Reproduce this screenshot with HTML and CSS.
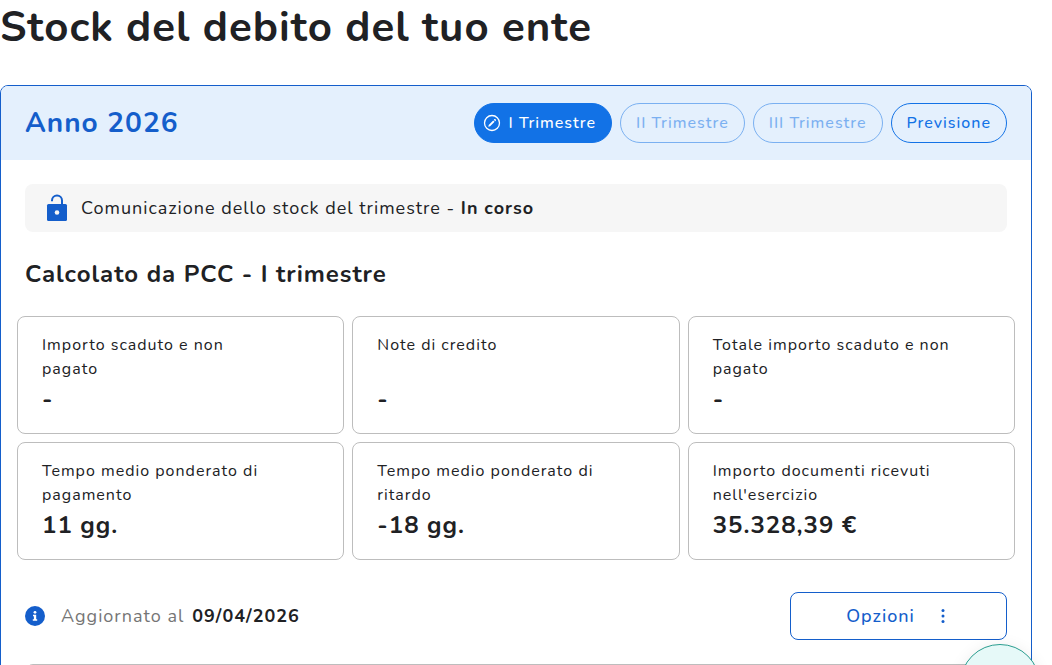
FILE: index.html
```html
<!DOCTYPE html>
<html lang="it">
<head>
    <meta charset="UTF-8">
    <meta name="viewport" content="width=device-width, initial-scale=1.0">
    <title>Stock del debito</title>
    <link rel="stylesheet" href="styles.css">
</head>
<body>
    <main class="page">
        <h1 class="page-title">Stock del debito del tuo ente</h1>

        <section class="year-card">
            <header class="year-header">
                <h2 class="year-title">Anno 2026</h2>
                <div class="periods">
                    <button type="button" class="chip chip-active">
                        <svg class="chip-icon" viewBox="0 0 18 18" aria-hidden="true">
                            <circle cx="9" cy="9" r="7.5" fill="none" stroke="currentColor" stroke-width="1.3"/>
                            <path d="M5.3 12.7l.4-1.8 4.5-4.5 1.4 1.4-4.5 4.5zM10.8 5.8l.7-.7q.4-.4.8 0l.6.6q.4.4 0 .8l-.7.7z" fill="currentColor"/>
                        </svg>
                        I Trimestre
                    </button>
                    <button type="button" class="chip" disabled>II Trimestre</button>
                    <button type="button" class="chip" disabled>III Trimestre</button>
                    <button type="button" class="chip">Previsione</button>
                </div>
            </header>

            <div class="year-body">
                <div class="status">
                    <svg class="status-icon" viewBox="0 0 24 28" aria-hidden="true">
                        <path d="M7 7.2v-.6a5 5 0 0 1 10 0V11" fill="none" stroke="currentColor" stroke-width="2"/>
                        <rect x="2" y="10" width="20" height="17" rx="1.5" fill="currentColor"/>
                        <circle cx="12" cy="18.5" r="2.3" fill="#f6f6f6"/>
                    </svg>
                    <p>Comunicazione dello stock del trimestre - <strong>In corso</strong></p>
                </div>

                <h3 class="section-title">Calcolato da PCC - I trimestre</h3>

                <dl class="figures">
                    <div class="figure">
                        <dt>Importo scaduto e non<br>pagato</dt>
                        <dd>-</dd>
                    </div>
                    <div class="figure">
                        <dt>Note di credito</dt>
                        <dd>-</dd>
                    </div>
                    <div class="figure">
                        <dt>Totale importo scaduto e non<br>pagato</dt>
                        <dd>-</dd>
                    </div>
                    <div class="figure">
                        <dt>Tempo medio ponderato di<br>pagamento</dt>
                        <dd>11 gg.</dd>
                    </div>
                    <div class="figure">
                        <dt>Tempo medio ponderato di<br>ritardo</dt>
                        <dd>-18 gg.</dd>
                    </div>
                    <div class="figure">
                        <dt>Importo documenti ricevuti<br>nell'esercizio</dt>
                        <dd>35.328,39 €</dd>
                    </div>
                </dl>

                <div class="update-row">
                    <div class="updated">
                        <svg class="info-icon" viewBox="0 0 20 20" aria-hidden="true">
                            <circle cx="10" cy="10" r="10" fill="#145ecb"/>
                            <circle cx="10" cy="6.3" r="1.4" fill="#fff"/>
                            <path d="M8 8.8h3.2v4.4h1v1.5H7.8v-1.5h1.1v-2.9H8z" fill="#fff"/>
                        </svg>
                        <span>Aggiornato al</span>
                        <strong>09/04/2026</strong>
                    </div>
                    <button type="button" class="options">
                        Opzioni
                        <svg class="dots" viewBox="0 0 16 16" aria-hidden="true">
                            <circle cx="8" cy="2.5" r="1.5" fill="currentColor"/>
                            <circle cx="8" cy="8" r="1.5" fill="currentColor"/>
                            <circle cx="8" cy="13.5" r="1.5" fill="currentColor"/>
                        </svg>
                    </button>
                </div>

                <div class="details"></div>
            </div>
        </section>
    </main>

    <button type="button" class="help" aria-label="Assistenza"></button>
</body>
</html>
```

FILE: styles.css
```css
* {
    box-sizing: border-box;
}
body {
    margin: 0;
    height: 100vh;
    overflow: hidden;
    background: #fff;
    color: #202124;
    font-family: Nunito, "Open Sans", sans-serif;
    font-size: 16px;
    line-height: 24px;
    letter-spacing: 1px;
}
h1, h2, h3, p, dl, dd {
    margin: 0;
}
button {
    font: inherit;
    letter-spacing: inherit;
    cursor: pointer;
}
.page {
    padding-right: 20px;
}
.page-title {
    font-size: 42px;
    line-height: 56px;
    padding-bottom: 29px;
}
.year-card {
    border: 1px solid #145ecb;
    border-radius: 8px;
    overflow: hidden;
}
.year-header {
    display: flex;
    align-items: center;
    justify-content: space-between;
    padding: 17px 24px;
    background: #e4f0fd;
}
.year-title {
    color: #145ecb;
    font-size: 28px;
    line-height: 40px;
}
.periods {
    display: flex;
    gap: 8px;
}
.chip {
    display: flex;
    align-items: center;
    gap: 8px;
    height: 40px;
    padding: 0 15px;
    border: 1px solid #1272e6;
    border-radius: 20px;
    background: transparent;
    color: #1272e6;
    font-weight: 500;
}
.chip-active {
    padding-left: 8px;
    background: #1272e6;
    color: #fff;
}
.chip:disabled {
    opacity: 0.5;
    cursor: default;
}
.chip-icon {
    width: 18px;
    height: 18px;
}
.year-body {
    padding: 24px 24px 0;
}
.status {
    display: flex;
    align-items: center;
    gap: 12px;
    height: 48px;
    padding: 0 20px;
    border-radius: 8px;
    background: #f6f6f6;
    font-size: 18px;
}
.status-icon {
    width: 24px;
    height: 28px;
    color: #145ecb;
}
.section-title {
    padding: 24px 0;
    font-size: 24px;
    line-height: 36px;
}
.figures {
    display: grid;
    grid-template-columns: repeat(3, 1fr);
    gap: 8px;
    margin: 0 -8px;
}
.figure {
    display: flex;
    flex-direction: column;
    justify-content: space-between;
    min-height: 118px;
    padding: 16px 24px;
    border: 1px solid #bdbdbd;
    border-radius: 8px;
}
.figure dd {
    font-size: 24px;
    font-weight: 700;
    line-height: 36px;
}
.update-row {
    display: flex;
    align-items: center;
    justify-content: space-between;
    padding: 32px 0 24px;
    font-size: 18px;
}
.updated {
    display: flex;
    align-items: center;
    gap: 8px;
    color: #757575;
}
.updated strong {
    color: #202124;
}
.info-icon {
    width: 20px;
    height: 20px;
    margin-right: 8px;
}
.options {
    display: flex;
    align-items: center;
    justify-content: center;
    gap: 20px;
    width: 217px;
    height: 48px;
    border: 1px solid #145ecb;
    border-radius: 8px;
    background: #fff;
    color: #145ecb;
    font-weight: 500;
}
.dots {
    width: 16px;
    height: 16px;
}
.details {
    height: 120px;
    border: 1px solid #bdbdbd;
    border-radius: 8px;
}
.help {
    position: fixed;
    right: 12px;
    bottom: -59px;
    width: 80px;
    height: 80px;
    border: 1px solid #2a9d8f;
    border-radius: 50%;
    background: #e6f9f8;
    box-shadow: 0 2px 16px rgba(0, 0, 0, 0.08);
}
```
